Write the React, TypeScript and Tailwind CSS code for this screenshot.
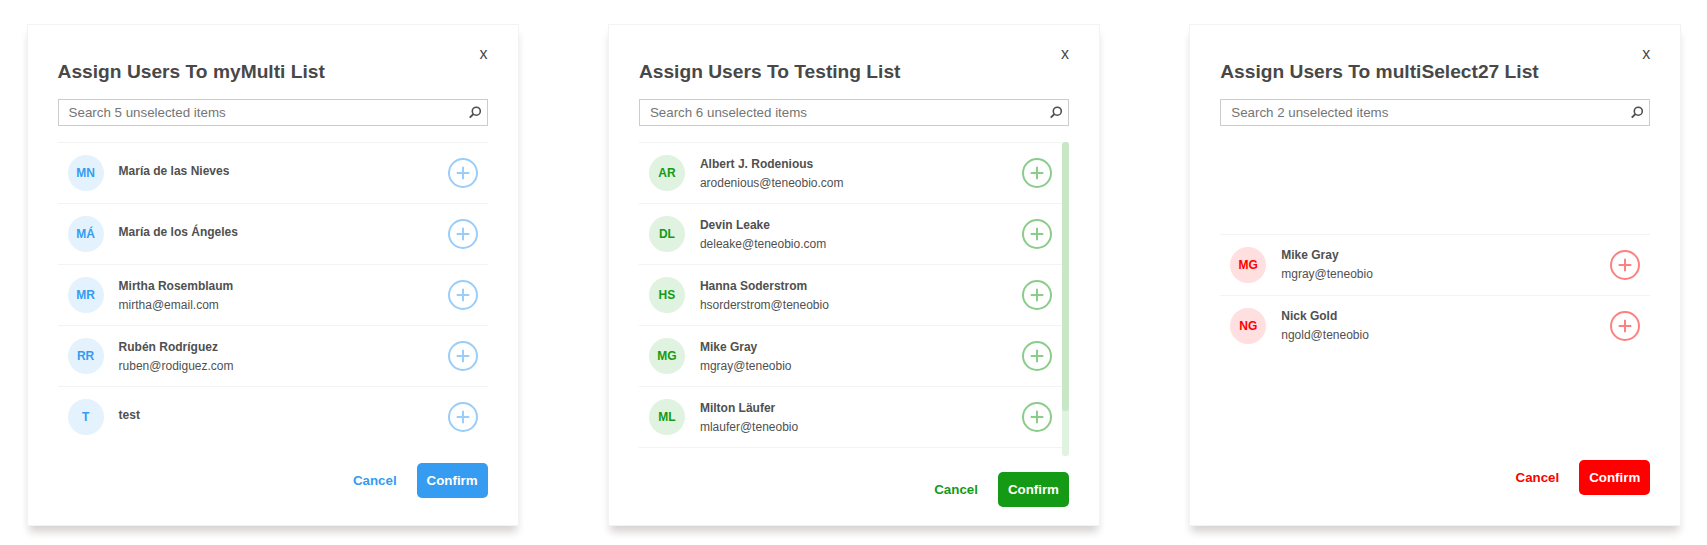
import React from "react";

type User = { initials: string; name: string; email?: string };

type Theme = {
  avatar: string;
  ring: string;
  cancel: string;
  confirm: string;
};

const blue: Theme = {
  avatar: "bg-[#e3f2fd] text-[#359cf1]",
  ring: "text-[#9acdf8]",
  cancel: "text-[#359cf1]",
  confirm: "bg-[#359cf1]",
};
const green: Theme = {
  avatar: "bg-[#e0f2e0] text-[#159a15]",
  ring: "text-[#8acc8a]",
  cancel: "text-[#159a15]",
  confirm: "bg-[#159a15]",
};
const red: Theme = {
  avatar: "bg-[#ffdfdf] text-[#ff0000]",
  ring: "text-[#ff8080]",
  cancel: "text-[#ff0000]",
  confirm: "bg-[#ff0000]",
};

function SearchIcon() {
  return (
    <svg width="13" height="13" viewBox="0 0 13 13" fill="none" stroke="#4f4f4f" className="mr-[5px] shrink-0">
      <circle cx="7.3" cy="5.2" r="4" strokeWidth="1.6" />
      <path d="M4.5 8L0.7 11.6" strokeWidth="1.9" />
    </svg>
  );
}

function AddIcon({ className }: { className: string }) {
  return (
    <svg width="30" height="30" viewBox="0 0 30 30" fill="none" stroke="currentColor" strokeWidth="2" className={className}>
      <circle cx="15" cy="15" r="14" />
      <path d="M15 8.7v12.6M8.7 15h12.6" />
    </svg>
  );
}

function Row({ user, theme, textClass }: { user: User; theme: Theme; textClass: string }) {
  return (
    <li className="flex h-[61px] shrink-0 items-center border-t border-[#f3f3f3] px-2.5">
      <div className={`flex size-9 items-center justify-center rounded-full text-xs font-bold ${theme.avatar}`}>
        {user.initials}
      </div>
      <div className={`ml-[15px] flex h-10 flex-1 flex-col text-xs text-[#505050] ${textClass}`}>
        <span className={user.email ? "h-[19px] leading-[19px] font-bold" : "h-[33px] leading-[33px] font-bold"}>
          {user.name}
        </span>
        {user.email && <span className="h-[19px] leading-[19px]">{user.email}</span>}
      </div>
      <AddIcon className={theme.ring} />
    </li>
  );
}

type DialogProps = {
  title: string;
  count: number;
  users: User[];
  theme: Theme;
  listClass: string;
  textClass: string;
  scroll?: boolean;
};

function AssignDialog({ title, count, users, theme, listClass, textClass, scroll }: DialogProps) {
  return (
    <section className="flex h-[502px] w-[492px] shrink-0 flex-col border border-[#f3f3f3] bg-white px-[30px] shadow-[0_8px_8px_-2px_#d7d3d2]">
      <button className="mt-[19px] h-5 self-end text-base leading-5 text-[#484848]">x</button>
      <h3 className="-mt-1 h-6 text-[19.2px] leading-6 font-bold text-[#484848]">{title}</h3>
      <div className="mt-[15px] flex h-[27px] shrink-0 items-center border border-[#ccc]">
        <input
          className="h-full min-w-0 flex-1 pl-2.5 text-[13.333px] outline-none placeholder:text-[#757575]"
          placeholder={`Search ${count} unselected items`}
        />
        <SearchIcon />
      </div>
      <div className={`mt-4 flex shrink-0 ${listClass}`}>
        <ul className="flex flex-1 flex-col">
          {users.map((u) => (
            <Row key={u.name} user={u} theme={theme} textClass={textClass} />
          ))}
          {scroll && <li className="border-t border-[#f3f3f3]" />}
        </ul>
        {scroll && (
          <div className="h-full w-[7px] rounded-[3px] bg-[#e0f2e0]">
            <div className="h-[269px] rounded-[3px] bg-[#c7e7c7]" />
          </div>
        )}
      </div>
      <footer className="mt-4 flex h-[35px] items-center justify-end gap-5 text-[13.333px] font-bold">
        <button className={theme.cancel}>Cancel</button>
        <button className={`h-[35px] w-[71px] rounded-[5px] text-white ${theme.confirm}`}>Confirm</button>
      </footer>
    </section>
  );
}

const multiUsers: User[] = [
  { initials: "MN", name: "María de las Nieves" },
  { initials: "MÁ", name: "María de los Ángeles" },
  { initials: "MR", name: "Mirtha Rosemblaum", email: "mirtha@email.com" },
  { initials: "RR", name: "Rubén Rodríguez", email: "ruben@rodiguez.com" },
  { initials: "T", name: "test" },
];
const testingUsers: User[] = [
  { initials: "AR", name: "Albert J. Rodenious", email: "arodenious@teneobio.com" },
  { initials: "DL", name: "Devin Leake", email: "deleake@teneobio.com" },
  { initials: "HS", name: "Hanna Soderstrom", email: "hsorderstrom@teneobio" },
  { initials: "MG", name: "Mike Gray", email: "mgray@teneobio" },
  { initials: "ML", name: "Milton Läufer", email: "mlaufer@teneobio" },
];
const selectUsers: User[] = [
  { initials: "MG", name: "Mike Gray", email: "mgray@teneobio" },
  { initials: "NG", name: "Nick Gold", email: "ngold@teneobio" },
];

export default function App() {
  return (
    <main className="flex h-[545px] gap-[89.33px] overflow-hidden bg-white pt-6 pl-[26.6px] font-['Liberation_Sans',Arial,sans-serif]">
      <AssignDialog title="Assign Users To myMulti List" count={5} users={multiUsers} theme={blue} listClass="h-[305px]" textClass="pt-0.5" />
      <AssignDialog title="Assign Users To Testing List" count={6} users={testingUsers} theme={green} listClass="h-[314px]" textClass="pt-0.5" scroll />
      <AssignDialog title="Assign Users To multiSelect27 List" count={2} users={selectUsers} theme={red} listClass="h-[302px] pt-[92px]" textClass="pt-px" />
    </main>
  );
}
